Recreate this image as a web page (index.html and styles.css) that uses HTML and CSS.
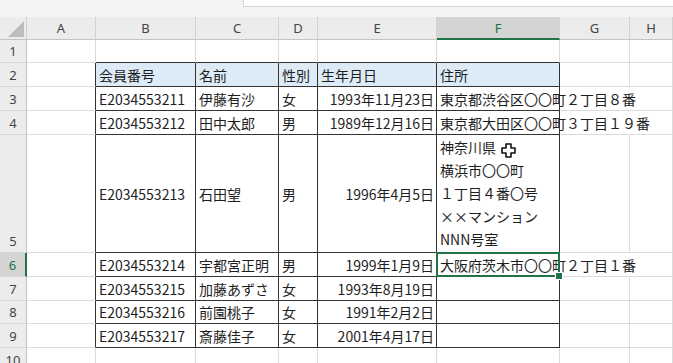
FILE: index.html
```html
<!DOCTYPE html>
<html lang="ja">
<head>
<meta charset="utf-8">
<title>会員名簿</title>
<link rel="stylesheet" href="styles.css">
</head>
<body>
<div class="top"><div class="fx"></div></div>
<div class="sheet">
  <div class="corner"><svg width="27" height="23" viewBox="0 0 27 23"><polygon points="8,20 24,20 24,4" fill="#bdbdbd"/></svg></div>
  <div class="ch">A</div><div class="ch">B</div><div class="ch">C</div><div class="ch">D</div><div class="ch">E</div><div class="ch sel">F</div><div class="ch">G</div><div class="ch">H</div>

  <div class="rh">1</div>
  <div class="c"></div><div class="c tt"></div><div class="c tt"></div><div class="c tt"></div><div class="c tt"></div><div class="c tt"></div><div class="c"></div><div class="c"></div>

  <div class="rh">2</div>
  <div class="c tl"></div><div class="c t hd">会員番号</div><div class="c t hd">名前</div><div class="c t hd">性別</div><div class="c t hd">生年月日</div><div class="c t hd">住所</div><div class="c"></div><div class="c"></div>

  <div class="rh">3</div>
  <div class="c tl"></div><div class="c t">E2034553211</div><div class="c t">伊藤有沙</div><div class="c t">女</div><div class="c t r">1993年11月23日</div><div class="c t ovf">東京都渋谷区〇〇町２丁目８番</div><div class="c ov"></div><div class="c"></div>

  <div class="rh">4</div>
  <div class="c tl"></div><div class="c t">E2034553212</div><div class="c t">田中太郎</div><div class="c t">男</div><div class="c t r">1989年12月16日</div><div class="c t ovf">東京都大田区〇〇町３丁目１９番</div><div class="c ov"></div><div class="c"></div>

  <div class="rh rb">5</div>
  <div class="c tl"></div><div class="c t">E2034553213</div><div class="c t">石田望</div><div class="c t">男</div><div class="c t r">1996年4月5日</div>
  <div class="c t wrap">
    <span>神奈川県</span><span>横浜市〇〇町</span><span>１丁目４番〇号</span><span>××マンション</span><span>NNN号室</span>
    <svg class="cursor" width="15" height="15" viewBox="0 0 15 15"><path d="M5 1h5v4h4v5h-4v4H5v-4H1V5h4z" fill="#fff" stroke="#111" stroke-width="1.6" stroke-linejoin="round"/></svg>
  </div>
  <div class="c"></div><div class="c"></div>

  <div class="rh rsel">6</div>
  <div class="c tl"></div><div class="c t">E2034553214</div><div class="c t">宇都宮正明</div><div class="c t">男</div><div class="c t r">1999年1月9日</div><div class="c t ovf active">大阪府茨木市〇〇町２丁目１番</div><div class="c ov"></div><div class="c"></div>

  <div class="rh">7</div>
  <div class="c tl"></div><div class="c t">E2034553215</div><div class="c t">加藤あずさ</div><div class="c t">女</div><div class="c t r">1993年8月19日</div><div class="c t"></div><div class="c"></div><div class="c"></div>

  <div class="rh">8</div>
  <div class="c tl"></div><div class="c t">E2034553216</div><div class="c t">前園桃子</div><div class="c t">女</div><div class="c t r">1991年2月2日</div><div class="c t"></div><div class="c"></div><div class="c"></div>

  <div class="rh">9</div>
  <div class="c tl"></div><div class="c t">E2034553217</div><div class="c t">斎藤佳子</div><div class="c t">女</div><div class="c t r">2001年4月17日</div><div class="c t"></div><div class="c"></div><div class="c"></div>

  <div class="rh">10</div>
  <div class="c"></div><div class="c"></div><div class="c"></div><div class="c"></div><div class="c"></div><div class="c"></div><div class="c"></div><div class="c"></div>
</div>
</body>
</html>
```

FILE: styles.css
```css
* { box-sizing: border-box; }
html, body {
  margin: 0;
  padding: 0;
  width: 673px;
  height: 363px;
  overflow: hidden;
  background: #ffffff;
}
body {
  font-family: "Noto Sans CJK JP", "Noto Sans", sans-serif;
  color: #1e1e1e;
}
.top {
  height: 17px;
  background: #f3f3f3;
  display: flex;
}
.fx {
  margin-left: 243px;
  flex: 1;
  height: 7px;
  background: #ffffff;
  border-left: 1px solid #d6d6d6;
  border-bottom: 1px solid #d6d6d6;
}
.sheet {
  display: grid;
  grid-template-columns: 27px 69px 100px 83px 39px 119px 123px 70px 1fr;
  grid-template-rows: 23px 23px 24px 24px 24px 118px 24px 24px 23px 24px 24px;
  background: #ffffff;
}
.corner {
  background: #ececec;
  border-right: 1px solid #cfcfcf;
  border-bottom: 1px solid #c4c4c4;
}
.corner svg { display: block; }
.ch {
  background: #ececec;
  border-right: 1px solid #d2d2d2;
  border-bottom: 1px solid #c4c4c4;
  display: flex;
  align-items: center;
  justify-content: center;
  font-family: "Noto Sans", "Liberation Sans", sans-serif;
  font-size: 13px;
  color: #444;
}
.ch.sel {
  background: #d4d4d4;
  border-bottom: 2px solid #217346;
  color: #217346;
}
.rh {
  background: #ececec;
  border-right: 1px solid #c4c4c4;
  border-bottom: 1px solid #d8d8d8;
  display: flex;
  align-items: center;
  justify-content: center;
  font-family: "Noto Sans", "Liberation Sans", sans-serif;
  font-size: 13px;
  color: #444;
}
.rh.rb {
  align-items: flex-end;
  padding-bottom: 2px;
}
.rh.rsel {
  background: #d4d4d4;
  border-right: 2px solid #217346;
  color: #217346;
}
.c {
  border-right: 1px solid #dcdcdc;
  border-bottom: 1px solid #dcdcdc;
  display: flex;
  align-items: center;
  padding: 0 3px;
  font-size: 14px;
  white-space: nowrap;
  position: relative;
}
.c.tt { border-bottom-color: #333; }
.c.tl { border-right-color: #333; }
.c.t {
  border-right-color: #333;
  border-bottom-color: #333;
}
.c.hd { background: #ddebf7; }
.c.r {
  justify-content: flex-end;
  padding-right: 2px;
}
.c.ovf {
  overflow: visible;
  z-index: 2;
}
.c.ov { border-right-color: transparent; }
.c.wrap {
  flex-direction: column;
  align-items: flex-start;
  justify-content: flex-start;
  line-height: 23px;
  padding-top: 1px;
}
.cursor {
  position: absolute;
  left: 64px;
  top: 8px;
}
.c.active::after {
  content: "";
  position: absolute;
  left: -1px;
  top: -1px;
  right: -1px;
  bottom: -1px;
  border: 2px solid #217346;
}
.c.active::before {
  content: "";
  position: absolute;
  right: -4px;
  bottom: -4px;
  width: 6px;
  height: 6px;
  background: #217346;
  border: 1px solid #ffffff;
  z-index: 3;
}
```
